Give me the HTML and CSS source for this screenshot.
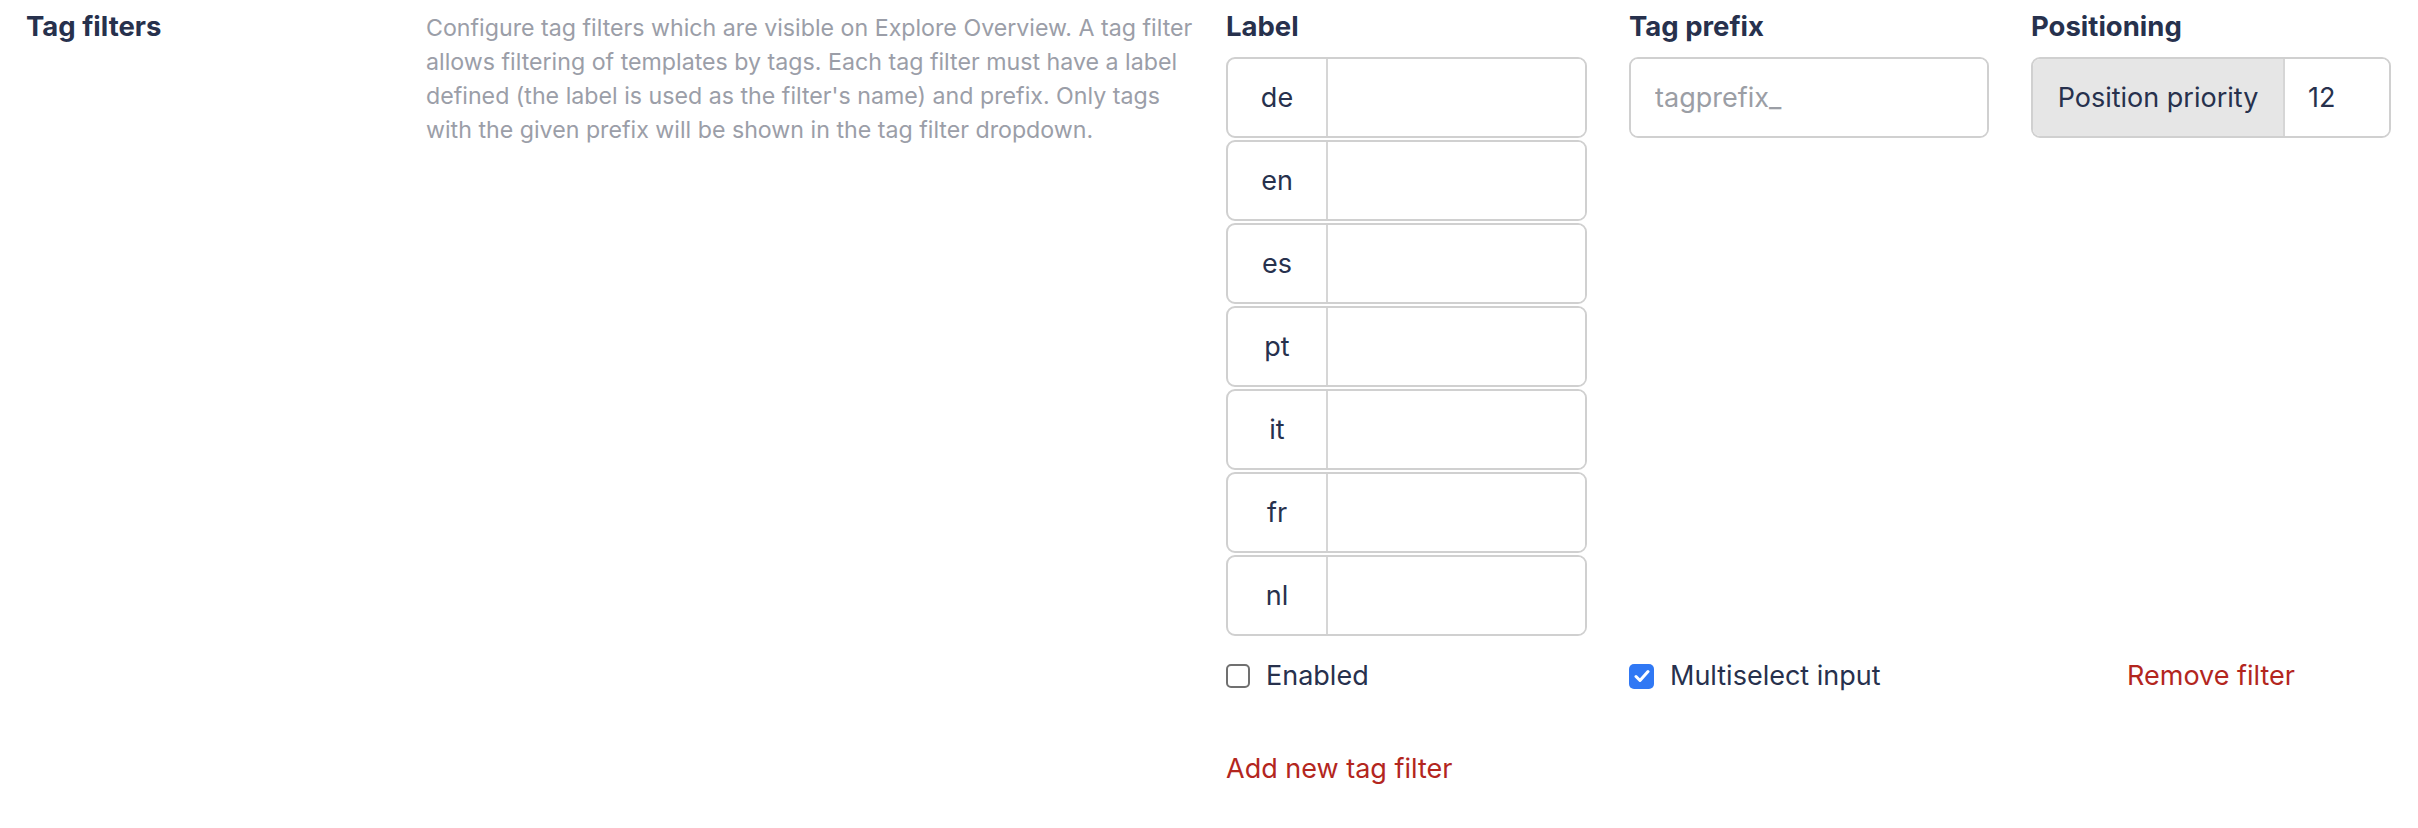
FILE: index.html
```html
<!DOCTYPE html>
<html lang="en">
    <head>
        <meta charset="UTF-8">
        <title>Tag filters</title>
        <link rel="stylesheet" href="styles.css">
    </head>
    <body>
        <div class="setting">
            <div class="setting-title">Tag filters</div>
            <div class="setting-desc">
                Configure tag filters which are visible on Explore Overview. A tag filter<br>
                allows filtering of templates by tags. Each tag filter must have a label<br>
                defined (the label is used as the filter's name) and prefix. Only tags<br>
                with the given prefix will be shown in the tag filter dropdown.
            </div>

            <div class="setting-body">
                <div class="filter">
                    <div class="col-head">Label</div>
                    <div class="col-head">Tag prefix</div>
                    <div class="col-head">Positioning</div>

                    <!-- label per language -->
                    <div class="labels">
                        <div class="group"><span class="addon">de</span><input type="text" class="field"></div>
                        <div class="group"><span class="addon">en</span><input type="text" class="field"></div>
                        <div class="group"><span class="addon">es</span><input type="text" class="field"></div>
                        <div class="group"><span class="addon">pt</span><input type="text" class="field"></div>
                        <div class="group"><span class="addon">it</span><input type="text" class="field"></div>
                        <div class="group"><span class="addon">fr</span><input type="text" class="field"></div>
                        <div class="group"><span class="addon">nl</span><input type="text" class="field"></div>
                    </div>

                    <div>
                        <div class="group"><input type="text" class="field prefix" placeholder="tagprefix_"></div>
                    </div>

                    <div>
                        <div class="group">
                            <span class="addon addon-grey">Position priority</span>
                            <input type="text" class="field num" value="12">
                        </div>
                    </div>

                    <label class="option">
                        <span class="check"></span>
                        Enabled
                    </label>
                    <label class="option">
                        <span class="check checked">
                            <svg width="16" height="14" viewBox="0 0 16 14"><path d="M2 7.5 L6 11.5 L14 2.5" fill="none" stroke="#fff" stroke-width="3" stroke-linecap="round" stroke-linejoin="round"/></svg>
                        </span>
                        Multiselect input
                    </label>
                    <div class="option option-center">
                        <a href="#" class="link">Remove filter</a>
                    </div>
                </div>

                <div class="add">
                    <a href="#" class="link">Add new tag filter</a>
                </div>
            </div>
        </div>
    </body>
</html>
```

FILE: styles.css
```css
body {
    margin: 0;
    background: #fff;
    color: #27314d;
    font-family: Inter, "Noto Sans", sans-serif;
}

.setting {
    display: flex;
    padding: 9px 26px 0;
}

.setting-title {
    width: 400px;
    flex: none;
    font-size: 27.5px;
    font-weight: 700;
    line-height: 34px;
}

.setting-desc {
    width: 766px;
    flex: none;
    margin-right: 34px;
    padding-top: 2px;
    font-size: 23.2px;
    line-height: 34px;
    color: #9b9ea8;
    white-space: nowrap;
}

.setting-body {
    flex: none;
}

.filter {
    display: grid;
    grid-template-columns: 361px 360px 360px;
    column-gap: 42px;
    align-items: start;
}

.col-head {
    font-size: 27.5px;
    font-weight: 700;
    line-height: 34px;
    margin-bottom: 14px;
}

.group {
    display: flex;
    height: 81px;
    box-sizing: border-box;
    border: 2px solid #d0d0d0;
    border-radius: 9px;
    overflow: hidden;
    margin-bottom: 2px;
}

.addon {
    width: 98px;
    flex: none;
    display: flex;
    align-items: center;
    justify-content: center;
    border-right: 2px solid #d6d6d6;
    font-size: 27px;
}

.addon-grey {
    width: 250px;
    background: #e6e6e6;
}

.field {
    flex: 1;
    min-width: 0;
    border: 0;
    outline: 0;
    padding: 0 24px;
    font-family: inherit;
    font-size: 27px;
    color: #27314d;
    background: #fff;
}

.field::placeholder {
    color: #9b9ea5;
}

.num {
    padding-left: 23px;
}

.option {
    display: flex;
    align-items: center;
    gap: 16px;
    margin-top: 21px;
    font-size: 27px;
    line-height: 34px;
}

.option-center {
    justify-content: center;
}

.check {
    width: 24px;
    height: 24px;
    box-sizing: border-box;
    border: 2px solid #707070;
    border-radius: 5px;
    display: flex;
    align-items: center;
    justify-content: center;
    background: #fff;
}

.check.checked {
    width: 25px;
    height: 25px;
    border: 0;
    background: #3078f4;
}

.link {
    color: #b3261e;
    text-decoration: none;
    font-size: 27px;
    line-height: 34px;
}

.add {
    margin-top: 59px;
}
```
